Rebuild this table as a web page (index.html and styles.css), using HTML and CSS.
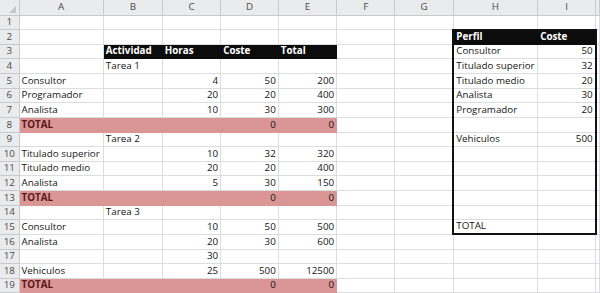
FILE: index.html
```html
<!DOCTYPE html>
<html lang="es">
<head>
<meta charset="utf-8">
<title>Hoja de costes</title>
<link rel="stylesheet" href="styles.css">
</head>
<body>
<table class="sheet">
  <colgroup>
    <col class="c-rh"><col class="c-a"><col class="c-b"><col class="c-c"><col class="c-d"><col class="c-e"><col class="c-f"><col class="c-g"><col class="c-h"><col class="c-i"><col class="c-j">
  </colgroup>
  <thead>
    <tr class="colhead">
      <th class="corner"><span class="tri"></span></th>
      <th>A</th><th>B</th><th>C</th><th>D</th><th>E</th><th>F</th><th>G</th><th>H</th><th>I</th><th></th>
    </tr>
  </thead>
  <tbody>
    <tr><th class="rh">1</th><td></td><td></td><td></td><td></td><td></td><td></td><td></td><td></td><td></td><td></td></tr>
    <tr><th class="rh">2</th><td></td><td></td><td></td><td></td><td></td><td></td><td></td><td class="hd bl bt">Perfil</td><td class="hd br bt">Coste</td><td></td></tr>
    <tr><th class="rh">3</th><td></td><td class="hd">Actividad</td><td class="hd">Horas</td><td class="hd">Coste</td><td class="hd">Total</td><td></td><td></td><td class="bl">Consultor</td><td class="n br">50</td><td></td></tr>
    <tr><th class="rh">4</th><td></td><td>Tarea 1</td><td></td><td></td><td></td><td></td><td></td><td class="bl">Titulado superior</td><td class="n br">32</td><td></td></tr>
    <tr><th class="rh">5</th><td>Consultor</td><td></td><td class="n">4</td><td class="n">50</td><td class="n">200</td><td></td><td></td><td class="bl">Titulado medio</td><td class="n br">20</td><td></td></tr>
    <tr><th class="rh">6</th><td>Programador</td><td></td><td class="n">20</td><td class="n">20</td><td class="n">400</td><td></td><td></td><td class="bl">Analista</td><td class="n br">30</td><td></td></tr>
    <tr><th class="rh">7</th><td>Analista</td><td></td><td class="n">10</td><td class="n">30</td><td class="n">300</td><td></td><td></td><td class="bl">Programador</td><td class="n br">20</td><td></td></tr>
    <tr><th class="rh">8</th><td class="tot tl">TOTAL</td><td class="tot"></td><td class="tot"></td><td class="tot n">0</td><td class="tot n">0</td><td></td><td></td><td class="bl"></td><td class="br"></td><td></td></tr>
    <tr><th class="rh">9</th><td></td><td>Tarea 2</td><td></td><td></td><td></td><td></td><td></td><td class="bl">Vehiculos</td><td class="n br">500</td><td></td></tr>
    <tr><th class="rh">10</th><td>Titulado superior</td><td></td><td class="n">10</td><td class="n">32</td><td class="n">320</td><td></td><td></td><td class="bl"></td><td class="br"></td><td></td></tr>
    <tr><th class="rh">11</th><td>Titulado medio</td><td></td><td class="n">20</td><td class="n">20</td><td class="n">400</td><td></td><td></td><td class="bl"></td><td class="br"></td><td></td></tr>
    <tr><th class="rh">12</th><td>Analista</td><td></td><td class="n">5</td><td class="n">30</td><td class="n">150</td><td></td><td></td><td class="bl"></td><td class="br"></td><td></td></tr>
    <tr><th class="rh">13</th><td class="tot tl">TOTAL</td><td class="tot"></td><td class="tot"></td><td class="tot n">0</td><td class="tot n">0</td><td></td><td></td><td class="bl"></td><td class="br"></td><td></td></tr>
    <tr><th class="rh">14</th><td></td><td>Tarea 3</td><td></td><td></td><td></td><td></td><td></td><td class="bl"></td><td class="br"></td><td></td></tr>
    <tr><th class="rh">15</th><td>Consultor</td><td></td><td class="n">10</td><td class="n">50</td><td class="n">500</td><td></td><td></td><td class="bl bb">TOTAL</td><td class="br bb"></td><td></td></tr>
    <tr><th class="rh">16</th><td>Analista</td><td></td><td class="n">20</td><td class="n">30</td><td class="n">600</td><td></td><td></td><td></td><td></td><td></td></tr>
    <tr><th class="rh">17</th><td></td><td></td><td class="n">30</td><td></td><td></td><td></td><td></td><td></td><td></td><td></td></tr>
    <tr><th class="rh">18</th><td>Vehiculos</td><td></td><td class="n">25</td><td class="n">500</td><td class="n">12500</td><td></td><td></td><td></td><td></td><td></td></tr>
    <tr><th class="rh">19</th><td class="tot tl">TOTAL</td><td class="tot"></td><td class="tot"></td><td class="tot n">0</td><td class="tot n">0</td><td></td><td></td><td></td><td></td><td></td></tr>
  </tbody>
</table>
</body>
</html>
```
FILE: styles.css
```css
html, body {
  margin: 0;
  padding: 0;
  background: #ffffff;
  overflow: hidden;
}

body {
  width: 600px;
  font-family: "Open Sans", "Noto Sans", sans-serif;
  font-size: 9.8px;
  color: #151515;
}

.sheet {
  border-collapse: collapse;
  table-layout: fixed;
  width: 600px;
}

.c-rh { width: 19px; }
.c-a { width: 84.3px; }
.c-b { width: 59px; }
.c-c { width: 58.4px; }
.c-d { width: 57.6px; }
.c-e { width: 58.4px; }
.c-f { width: 58.3px; }
.c-g { width: 58.3px; }
.c-h { width: 84.4px; }
.c-i { width: 58px; }
.c-j { width: 4.3px; }

.sheet tbody tr { height: 14.63px; }
.sheet thead tr { height: 15px; }

.sheet td,
.sheet th {
  border: 1px solid #dcdddf;
  padding: 0 2px 1px 2px;
  white-space: nowrap;
  overflow: hidden;
  vertical-align: bottom;
  line-height: 12px;
  text-align: left;
  font-weight: normal;
}

.sheet .colhead th {
  background: #eaebec;
  color: #4a4a4a;
  text-align: center;
  vertical-align: middle;
  padding: 0;
  border-color: #c9cacc;
  border-top: none;
}

.sheet th.rh {
  background: #eaebec;
  color: #4a4a4a;
  text-align: center;
  padding: 0 0 1px 0;
  border-color: #c9cacc;
  border-left: none;
}

.sheet .colhead th.corner {
  position: relative;
  border-left: none;
}

.tri {
  position: absolute;
  right: 3px;
  bottom: 2px;
  width: 0;
  height: 0;
  border-left: 7px solid transparent;
  border-bottom: 7px solid #c4c6c9;
}

.sheet td.n { text-align: right; }

.sheet td.hd {
  background: #0c0c0c;
  color: #ffffff;
  font-weight: bold;
  border-color: #0c0c0c;
}

.sheet td.tot {
  background: #da9694;
  border-color: #da9694;
}

.sheet td.tl {
  color: #5a1818;
  font-weight: bold;
}

.sheet td.bl { border-left: 2px solid #111111; }
.sheet td.br { border-right: 2px solid #111111; }
.sheet td.bt { border-top: 2px solid #111111; }
.sheet td.bb { border-bottom: 2px solid #111111; }
```
